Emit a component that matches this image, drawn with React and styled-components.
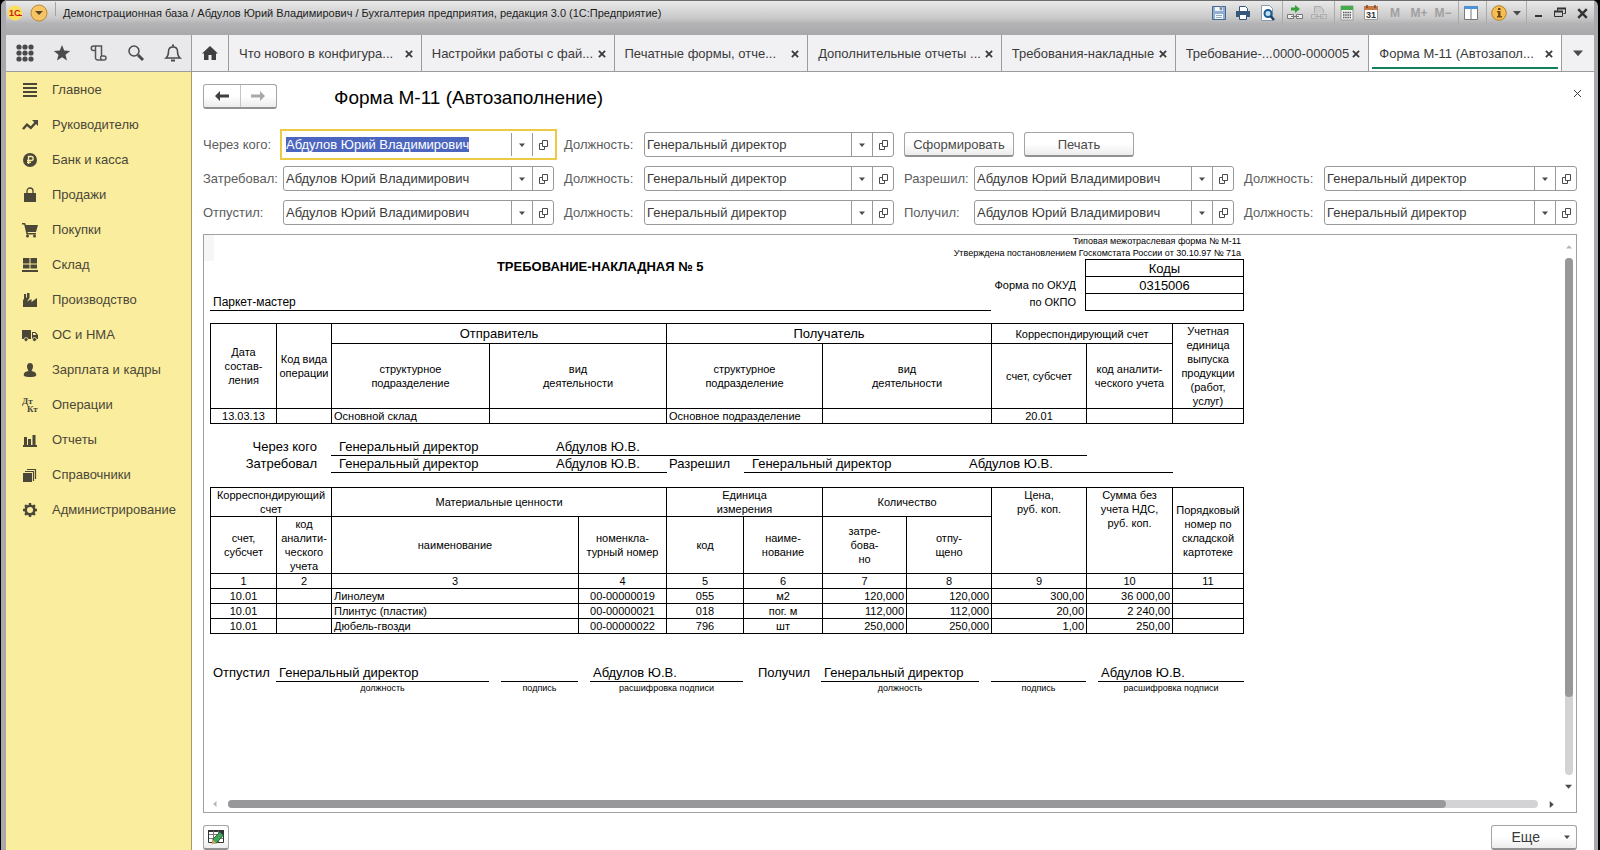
import React, { useEffect, useRef } from 'react';
import styled, { createGlobalStyle, css } from 'styled-components';

const GlobalStyle = createGlobalStyle`
  * {
    box-sizing: border-box;
  }
  body {
    margin: 0;
    background: #000;
    color: #3a3a3a;
    font-family: "Liberation Sans", Arial, sans-serif;
    font-size: 13px;
  }
  button,
  input {
    font: inherit;
    color: inherit;
  }
  button {
    padding: 0;
    border: none;
    background: none;
    cursor: pointer;
  }
`;

const sections = [
  ['Главное', 'main'],
  ['Руководителю', 'chart'],
  ['Банк и касса', 'bank'],
  ['Продажи', 'bag'],
  ['Покупки', 'cart'],
  ['Склад', 'stock'],
  ['Производство', 'factory'],
  ['ОС и НМА', 'truck'],
  ['Зарплата и кадры', 'person'],
  ['Операции', 'dtkt'],
  ['Отчеты', 'bars'],
  ['Справочники', 'books'],
  ['Администрирование', 'gear'],
];

const tabs = [
  { title: 'Что нового в конфигура...', grow: 193 },
  { title: 'Настройки работы с фай...', grow: 193 },
  { title: 'Печатные формы, отче...', grow: 194 },
  { title: 'Дополнительные отчеты ...', grow: 194 },
  { title: 'Требования-накладные', grow: 172 },
  { title: 'Требование-...0000-000005', grow: 194 },
  { title: 'Форма М-11 (Автозапол...', grow: 193, active: true },
];

const items = [
  ['10.01', '', 'Линолеум', '00-00000019', '055', 'м2', '120,000', '120,000', '300,00', '36 000,00', ''],
  ['10.01', '', 'Плинтус (пластик)', '00-00000021', '018', 'пог. м', '112,000', '112,000', '20,00', '2 240,00', ''],
  ['10.01', '', 'Дюбель-гвозди', '00-00000022', '796', 'шт', '250,000', '250,000', '1,00', '250,00', ''],
];

const aligns = ['center', 'center', 'left', 'center', 'center', 'center', 'right', 'right', 'right', 'right', 'center'];

const person = 'Абдулов Юрий Владимирович';
const post = 'Генеральный директор';
const shortName = 'Абдулов Ю.В.';

const sectionIcons = {
  main: <path d="M1 1h14v2H1zM1 5h14v2H1zM1 9h14v2H1zM1 13h14v2H1z" />,
  chart: <path d="M0 11.500 4.800 6l4 3.200 3.500-4L10 3h6v6l-2-2-5 5.400-4-3.200L2 12.800z" />,
  bank: (
    <>
      <circle cx="8" cy="8" r="7" />
      <path d="M6.500 12V4.500h2.700a2 2 0 0 1 0 4H5M5 10.400h4" fill="none" stroke="#fbed9e" strokeWidth="1.300" />
    </>
  ),
  bag: (
    <>
      <path d="M2 6h12v9H2z" />
      <path d="M5 8V4a3 3 0 0 1 6 0v4" fill="none" stroke="currentColor" strokeWidth="1.300" />
    </>
  ),
  cart: (
    <>
      <path d="M0 1h3l1 2h12l-2 7H5.500l.3 1H14v1.500H4.500L2.200 2.500H0z" />
      <circle cx="5.500" cy="14" r="1.500" />
      <circle cx="12.500" cy="14" r="1.500" />
    </>
  ),
  stock: <path d="M1 1h6.500v5.500H1zM8.500 1H15v5.500H8.500zM1 7.500h6.500v4H1zM8.500 7.500H15v4H8.500zM0 13h16v2H0z" />,
  factory: <path d="M1 15V8l1-1V2h2v4l1-1V1h2.500v5L5 9.500 9.500 7v3L15 6v9z" />,
  truck: (
    <>
      <path d="M0 3h9v9H0zM10 5h3.500L16 8v4h-6z" />
      <path d="M11 6h2l1.300 2H11z" fill="#fbed9e" />
      <circle cx="4" cy="12.500" r="2" stroke="#fbed9e" strokeWidth=".8" />
      <circle cx="12.500" cy="12.500" r="2" stroke="#fbed9e" strokeWidth=".8" />
    </>
  ),
  person: <path d="M8 1c2 0 3 1.500 3 3.500S9.700 8.500 9.500 9c3 .6 4.800 1.500 4.800 4.300C14 14.700 11 15 8 15s-6-.3-6.300-1.700c0-2.800 1.800-3.700 4.800-4.300C6.300 8.500 5 6.500 5 4.500S6 1 8 1z" />,
  dtkt: (
    <g fontFamily="Liberation Serif, serif" fontWeight="bold" fontSize="9">
      <text x="0" y="7">Дт</text>
      <text x="5" y="15">Кт</text>
    </g>
  ),
  bars: <path d="M1 13h14v2H1zM2 5h3v8H2zM6 7h3v6H6zM10.500 3h3v10h-3z" />,
  books: (
    <>
      <path d="M1 6h9v9H1z" />
      <path d="M3 4.500h8.500V14M5 2.500h8.500V12" fill="none" stroke="currentColor" strokeWidth="1.200" />
    </>
  ),
  gear: (
    <>
      <circle cx="8" cy="8" r="4.300" fill="none" stroke="currentColor" strokeWidth="2.600" />
      <path d="M6.800 1h2.400v3H6.800zM6.800 12h2.400v3H6.800zM1 6.800h3v2.400H1zM12 6.800h3v2.400h-3z" />
      <path d="M6.800 1h2.400v3H6.800zM6.800 12h2.400v3H6.800zM1 6.800h3v2.400H1zM12 6.800h3v2.400h-3z" transform="rotate(45 8 8)" />
    </>
  ),
};

const Caret = ({ size = 6, dir = 'down', color = '#4a4a4a' }) => {
  const turn = { down: 0, left: 90, up: 180, right: 270 }[dir];
  return (
    <svg width={size} height={size} viewBox="0 0 8 8" fill={color} aria-hidden="true">
      <path d="M0 2h8L4 6.500z" transform={`rotate(${turn} 4 4)`} />
    </svg>
  );
};

const Cross = ({ size = 9, width = 2 }) => (
  <svg width={size} height={size} viewBox="0 0 9 9" stroke="currentColor" strokeWidth={width} aria-hidden="true">
    <path d="M1 1l7 7M8 1L1 8" />
  </svg>
);

const OpenIcon = () => (
  <svg width="12" height="12" viewBox="0 0 12 12" fill="none" stroke="#4a4a4a" aria-hidden="true">
    <path d="M5.500 1.500h5v6h-5zM5.500 4.500h-3v6h5v-3" />
  </svg>
);

const TitleIcon = ({ children }) => (
  <svg width="16" height="16" viewBox="0 0 16 16" aria-hidden="true">{children}</svg>
);

const TitleBar = () => (
  <Title>
    <TitleLeft>
      <svg width="16" height="16" viewBox="0 0 16 16" aria-hidden="true">
        <circle cx="8" cy="8" r="7.500" fill="#fbdf5c" />
        <text x="2" y="11" fontSize="9" fontWeight="bold" fill="#c8201c">1C</text>
        <path d="M10 10.500h5" stroke="#c8201c" />
      </svg>
      <button type="button" aria-label="Меню">
        <svg width="18" height="18" viewBox="0 0 18 18">
          <circle cx="9" cy="9" r="8" fill="#f6c465" stroke="#bf8a32" />
          <path d="M5 7h8l-4 4z" fill="#5a4526" />
        </svg>
      </button>
      <Divider />
      <TitleText>
        Демонстрационная база / Абдулов Юрий Владимирович / Бухгалтерия предприятия, редакция 3.0 (1С:Предприятие)
      </TitleText>
    </TitleLeft>
    <TitleGroup>
      <TitleButton type="button" aria-label="Сохранить">
        <TitleIcon>
          <path d="M1.500 1.500h13v13h-13z" fill="#8fb0d2" stroke="#44688f" />
          <path d="M4 2h8v4H4zM4 9h8v5H4z" fill="#f3f7fb" />
          <path d="M9 2h2v3H9zM5 10.500h6M5 12.500h6" fill="#44688f" stroke="#9ab" />
        </TitleIcon>
      </TitleButton>
      <TitleButton type="button" aria-label="Печать">
        <TitleIcon>
          <path d="M4.500 1.500h6l2 2V7h-8z" fill="#fff" stroke="#35577c" />
          <path d="M1 6h14v6H1z" fill="#35577c" />
          <path d="M4.500 9.500h7v5h-7z" fill="#fff" stroke="#35577c" />
        </TitleIcon>
      </TitleButton>
      <TitleButton type="button" aria-label="Предварительный просмотр">
        <TitleIcon>
          <path d="M2.500.5h8l3 3v12h-11z" fill="#fff" stroke="#8a9bb0" />
          <circle cx="9" cy="8.500" r="3.500" fill="#c4dff2" stroke="#1d5e92" strokeWidth="2" />
          <path d="M11.500 11l3.500 4" stroke="#1d3f60" strokeWidth="2.500" />
        </TitleIcon>
      </TitleButton>
    </TitleGroup>
    <TitleGroup $line>
      <TitleButton type="button" aria-label="Получить ссылку">
        <TitleIcon>
          <path d="M4 2.500h4V0l5 4-5 4V5.500H4z" fill="#37a23c" />
          <path d="M.5 9.500h6v4h-6zM9.500 9.500h6v4h-6zM4 11.500h8" fill="#eee" stroke="#777" />
        </TitleIcon>
      </TitleButton>
      <TitleButton type="button" aria-label="Перейти по ссылке">
        <TitleIcon>
          <path d="M3.500 8V1.500h6l3 3V8M.5 9.500h6v4h-6zM9.500 9.500h6v4h-6zM4 11.500h8" fill="#ccc" stroke="#adadad" />
        </TitleIcon>
      </TitleButton>
    </TitleGroup>
    <TitleGroup $line>
      <TitleButton type="button" aria-label="Калькулятор">
        <TitleIcon>
          <path d="M2 1h12v14H2z" fill="#f3f3f3" stroke="#999" />
          <path d="M2 1h12v4H2z" fill="#45ab49" />
          <path d="M4 7.500h8M4 10h8M4 12.500h8" stroke="#555" strokeWidth="1.500" strokeDasharray="1.500 .7" />
        </TitleIcon>
      </TitleButton>
      <TitleButton type="button" aria-label="Календарь">
        <TitleIcon>
          <path d="M1.500 1.500h13v13h-13z" fill="#fff" stroke="#999" />
          <path d="M1 1h14v4H1z" fill="#c47a45" />
          <path d="M4 0v3M12 0v3" stroke="#7a4a28" strokeWidth="1.500" />
          <text x="3" y="13" fontSize="9" fill="#333">31</text>
        </TitleIcon>
      </TitleButton>
      <TitleButton type="button">M</TitleButton>
      <TitleButton type="button">M+</TitleButton>
      <TitleButton type="button">M−</TitleButton>
    </TitleGroup>
    <TitleGroup $line>
      <TitleButton type="button" aria-label="Панели">
        <TitleIcon>
          <path d="M1.500 1.500h13v13h-13z" fill="#fff" stroke="#777" />
          <path d="M1 1h14v3H1z" fill="#4d91d6" />
          <path d="M8 4v11" stroke="#777" />
        </TitleIcon>
      </TitleButton>
    </TitleGroup>
    <TitleGroup $line>
      <TitleButton type="button" aria-label="Справка">
        <TitleIcon>
          <circle cx="8" cy="8" r="7.300" fill="#f5bd52" stroke="#b98025" />
          <path d="M7 3h2.500v2H7zM6 6h3.500v5H11v1.500H6V11h1V7.500H6z" fill="#6b4c1c" />
        </TitleIcon>
      </TitleButton>
      <TitleButton type="button" $w={12} aria-label="Еще"><Caret size={8} /></TitleButton>
    </TitleGroup>
    <TitleGroup $line>
      <TitleButton type="button" $w={22} aria-label="Свернуть">
        <TitleIcon><path d="M5 10h7v2H5z" fill="#333" /></TitleIcon>
      </TitleButton>
      <TitleButton type="button" $w={22} aria-label="Развернуть">
        <TitleIcon>
          <path d="M5.500 6.500v-3h8v5h-2M2.500 6.500h8v5h-8z" fill="none" stroke="#333" />
          <path d="M5 3.500h9M2 6.500h9" stroke="#333" strokeWidth="2" />
        </TitleIcon>
      </TitleButton>
      <TitleButton type="button" $w={22} $dark aria-label="Закрыть"><Cross size={11} /></TitleButton>
    </TitleGroup>
  </Title>
);

const Tools = () => (
  <ToolStrip>
    <button type="button" aria-label="Меню функций">
      <svg width="18" height="18" viewBox="0 0 18 18" fill="#4a4a4a">
        {[3, 9, 15].map((y) => [3, 9, 15].map((x) => <circle key={`${x}${y}`} cx={x} cy={y} r="2.600" />))}
      </svg>
    </button>
    <button type="button" aria-label="Избранное">
      <svg width="18" height="18" viewBox="0 0 18 18" fill="#4a4a4a">
        <path d="M9 1l2.200 5.600 6 .3-4.700 3.800L14 16.500l-5-3.300-5 3.300 1.500-5.800L.8 6.900l6-.3z" />
      </svg>
    </button>
    <button type="button" aria-label="История">
      <svg width="18" height="18" viewBox="0 0 18 18" fill="none" stroke="#555" strokeWidth="1.500">
        <path d="M5 6.500H3.500a2 2 0 0 1 0-4.500H11.500v10.500M5.500 2.500v11A2.300 2.300 0 0 0 7.800 16H14a2 2 0 0 0 0-4h-2.500c-1.300.5-1.300 3.500.5 3.800" />
      </svg>
    </button>
    <button type="button" aria-label="Поиск">
      <svg width="18" height="18" viewBox="0 0 18 18" fill="none" stroke="#4a4a4a">
        <circle cx="7" cy="7" r="5" strokeWidth="1.500" />
        <path d="M11 11l5 5" strokeWidth="3" />
      </svg>
    </button>
    <button type="button" aria-label="Оповещения">
      <svg width="18" height="18" viewBox="0 0 18 18" fill="none" stroke="#4a4a4a" strokeWidth="1.500">
        <path d="M2 14h14c-2-1.500-2.500-2.500-2.500-6.500C13.500 4.500 11.500 3 9 3S4.500 4.500 4.500 7.500C4.500 11.500 4 12.500 2 14z" />
        <path d="M8 1.500h2M7 16.500h4" strokeWidth="2" />
      </svg>
    </button>
  </ToolStrip>
);

const Field = ({ id, label, value, focused }) => {
  const ref = useRef(null);
  useEffect(() => {
    if (focused) {
      ref.current.focus();
      ref.current.select();
    }
  }, [focused]);
  return (
    <>
      <Label htmlFor={id}>{label}</Label>
      <FieldBox $focused={focused}>
        <input id={id} ref={ref} defaultValue={value} spellCheck="false" />
        <FieldButton type="button" aria-label="Выбрать"><Caret /></FieldButton>
        <FieldButton type="button" aria-label="Открыть"><OpenIcon /></FieldButton>
      </FieldBox>
    </>
  );
};

const Filters = () => (
  <FilterGrid>
    <Field id="via" label="Через кого:" value={person} focused />
    <Field id="viaPost" label="Должность:" value={post} />
    <FilterActions>
      <PushButton type="button">Сформировать</PushButton>
      <PushButton type="button">Печать</PushButton>
    </FilterActions>
    <Field id="requested" label="Затребовал:" value={person} />
    <Field id="requestedPost" label="Должность:" value={post} />
    <Field id="allowed" label="Разрешил:" value={person} />
    <Field id="allowedPost" label="Должность:" value={post} />
    <Field id="released" label="Отпустил:" value={person} />
    <Field id="releasedPost" label="Должность:" value={post} />
    <Field id="received" label="Получил:" value={person} />
    <Field id="receivedPost" label="Должность:" value={post} />
  </FilterGrid>
);

const Cols = ({ widths }) => (
  <colgroup>
    {widths.map((w, i) => <col key={i} style={{ width: w }} />)}
  </colgroup>
);

const RouteTable = () => (
  <DataTable>
    <Cols widths={[66, 55, 158, 177, 156, 169, 95, 86, 71]} />
    <thead>
      <Row $h={20}>
        <th rowSpan={2}>Дата<br />состав-<br />ления</th>
        <th rowSpan={2}>Код вида<br />операции</th>
        <Big colSpan={2}>Отправитель</Big>
        <Big colSpan={2}>Получатель</Big>
        <th colSpan={2}>Корреспондирующий счет</th>
        <th rowSpan={2}>Учетная<br />единица<br />выпуска<br />продукции<br />(работ,<br />услуг)</th>
      </Row>
      <Row $h={65}>
        <th>структурное<br />подразделение</th>
        <th>вид<br />деятельности</th>
        <th>структурное<br />подразделение</th>
        <th>вид<br />деятельности</th>
        <th>счет, субсчет</th>
        <th>код аналити-<br />ческого учета</th>
      </Row>
    </thead>
    <tbody>
      <Row $h={15}>
        <td>13.03.13</td>
        <td />
        <Cell $align="left">Основной склад</Cell>
        <td />
        <Cell $align="left">Основное подразделение</Cell>
        <td />
        <td>20.01</td>
        <td />
        <td />
      </Row>
    </tbody>
  </DataTable>
);

const ItemsTable = () => (
  <DataTable>
    <Cols widths={[66, 55, 247, 88, 77, 79, 84, 85, 95, 86, 71]} />
    <thead>
      <Row $h={29}>
        <th colSpan={2}>Корреспондирующий<br />счет</th>
        <th colSpan={2}>Материальные ценности</th>
        <th colSpan={2}>Единица<br />измерения</th>
        <th colSpan={2}>Количество</th>
        <Top rowSpan={2}>Цена,<br />руб. коп.</Top>
        <Top rowSpan={2}>Сумма без<br />учета НДС,<br />руб. коп.</Top>
        <th rowSpan={2}>Порядковый<br />номер по<br />складской<br />картотеке</th>
      </Row>
      <Row $h={57}>
        <th>счет,<br />субсчет</th>
        <th>код<br />аналити-<br />ческого<br />учета</th>
        <th>наименование</th>
        <th>номенкла-<br />турный номер</th>
        <th>код</th>
        <th>наиме-<br />нование</th>
        <th>затре-<br />бова-<br />но</th>
        <th>отпу-<br />щено</th>
      </Row>
      <Row $h={15}>
        {aligns.map((_, i) => <th key={i}>{i + 1}</th>)}
      </Row>
    </thead>
    <tbody>
      {items.map((item) => (
        <Row key={item[3]} $h={15}>
          {item.map((value, i) => <Cell key={i} $align={aligns[i]}>{value}</Cell>)}
        </Row>
      ))}
    </tbody>
  </DataTable>
);

const Sheet = () => (
  <Paper>
    <Approval>
      Типовая межотраслевая форма № М-11<br />
      Утверждена постановлением Госкомстата России от 30.10.97 № 71а
    </Approval>
    <SheetHead>
      <Organization>
        <h2>ТРЕБОВАНИЕ-НАКЛАДНАЯ № 5</h2>
        <p>Паркет-мастер</p>
      </Organization>
      <CodesTable>
        <Cols widths={[95, 158]} />
        <tbody>
          <tr><th /><td>Коды</td></tr>
          <tr><th scope="row">Форма по ОКУД</th><td>0315006</td></tr>
          <tr><th scope="row">по ОКПО</th><td /></tr>
        </tbody>
      </CodesTable>
    </SheetHead>
    <RouteTable />
    <Approvers>
      <ApproverLine>
        <ApproverRole>Через кого</ApproverRole>
        <Underlined $w={756}><span>{post}</span><span>{shortName}</span></Underlined>
      </ApproverLine>
      <ApproverLine>
        <ApproverRole>Затребовал</ApproverRole>
        <Underlined $w={336}><span>{post}</span><span>{shortName}</span></Underlined>
        <ApproverRole $second>Разрешил</ApproverRole>
        <Underlined $w={429}><span>{post}</span><span>{shortName}</span></Underlined>
      </ApproverLine>
    </Approvers>
    <ItemsTable />
    <Signatures>
      <SignRole>Отпустил</SignRole>
      <Sign $w={213}><b>{post}</b><small>должность</small></Sign>
      <Sign $w={77}><b /><small>подпись</small></Sign>
      <Sign $w={153}><b>{shortName}</b><small>расшифровка подписи</small></Sign>
      <SignRole>Получил</SignRole>
      <Sign $w={158}><b>{post}</b><small>должность</small></Sign>
      <Sign $w={95}><b /><small>подпись</small></Sign>
      <Sign $w={146}><b>{shortName}</b><small>расшифровка подписи</small></Sign>
    </Signatures>
  </Paper>
);

const App = () => (
  <>
    <GlobalStyle />
    <Window>
      <TitleBar />
      <TopBar>
        <Tools />
        <HomeTab type="button" aria-label="Начальная страница">
          <svg width="16" height="14" viewBox="0 0 16 14" fill="#3f3f3f">
            <path d="M8 0l8 7.500h-2V14H9.500V9h-3v5H2V7.500H0z" />
          </svg>
        </HomeTab>
        {tabs.map((tab) => (
          <Tab key={tab.title} $grow={tab.grow} $active={tab.active}>
            <TabName type="button">{tab.title}</TabName>
            <button type="button" aria-label="Закрыть вкладку"><Cross size={8} /></button>
          </Tab>
        ))}
        <MoreTabs type="button" aria-label="Все вкладки"><Caret size={10} /></MoreTabs>
      </TopBar>
      <Body>
        <Sidebar>
          {sections.map(([name, icon]) => (
            <Section href="#" key={name}>
              <svg width="16" height="16" viewBox="0 0 16 16" fill="currentColor" aria-hidden="true">
                {sectionIcons[icon]}
              </svg>
              {name}
            </Section>
          ))}
        </Sidebar>
        <Main>
          <Heading>
            <History>
              <button type="button" aria-label="Назад">
                <svg width="14" height="10" viewBox="0 0 14 10" fill="#3f3f3f"><path d="M0 5l5-5v3.500h9v3H5V10z" /></svg>
              </button>
              <button type="button" aria-label="Вперед">
                <svg width="14" height="10" viewBox="0 0 14 10" fill="#a8a8a8"><path d="M14 5L9 0v3.500H0v3h9V10z" /></svg>
              </button>
            </History>
            <h1>Форма М-11 (Автозаполнение)</h1>
            <CloseForm type="button" aria-label="Закрыть"><Cross width={1} /></CloseForm>
          </Heading>
          <Filters />
          <Frame>
            <Sheet />
            <VScroll>
              <Caret size={6} dir="up" color="#b5b5b5" />
              <Track><Thumb style={{ height: '85%' }} /></Track>
              <Caret size={7} />
            </VScroll>
            <HScroll>
              <Caret size={6} dir="left" color="#b5b5b5" />
              <Track><Thumb style={{ width: '93%' }} /></Track>
              <Caret size={7} dir="right" />
            </HScroll>
          </Frame>
          <Footer>
            <EditButton type="button" aria-label="Редактирование">
              <svg width="16" height="16" viewBox="0 0 16 16">
                <path d="M.5 1.500h15v12H.5z" fill="#fff" stroke="#333" />
                <path d="M0 2h16" stroke="#333" strokeWidth="2" />
                <path d="M1 5.500h14M1 9.500h14M5.500 2v11M10.500 2v11" stroke="#777" />
                <path d="M5 13.500l0-3.500L12 3l3.500 3-7 8z" fill="#41a557" stroke="#24663a" />
                <path d="M12 3l1.500-1.500 2.500 2.500-1 2z" fill="#333" />
                <path d="M3.500 15.500l1.300-5 3.500 3.500z" fill="#c9a05c" />
              </svg>
            </EditButton>
            <MoreButton type="button">Еще<Caret /></MoreButton>
          </Footer>
        </Main>
      </Body>
    </Window>
  </>
);

export default App;

const center = css`
  display: flex;
  align-items: center;
  justify-content: center;
`;

const raised = css`
  border: 1px solid #a5a5a5;
  border-bottom: 2px solid #929292;
  border-radius: 3px;
  background: linear-gradient(#fff 50%, #ececec);
`;

const Window = styled.div`
  display: flex;
  flex-direction: column;
  min-height: 100vh;
  margin: 0 2px 0 1px;
  border: solid #a9a9ad;
  border-width: 0 4px 0 5px;
  border-radius: 6px 6px 0 0;
  background: #fff;
`;

const Title = styled.header`
  display: flex;
  align-items: flex-start;
  justify-content: space-between;
  height: 35px;
  border-top: 1px solid #6d6d6d;
  background: linear-gradient(#e9e9e9, #c9c9ca 50%, #b4b4b6 66%, #a8a8ab);
`;

const TitleLeft = styled.div`
  display: flex;
  flex: 1;
  gap: 7px;
  align-items: center;
  height: 24px;
  padding-left: 1px;
  button {
    display: flex;
  }
`;

const Divider = styled.span`
  width: 1px;
  height: 14px;
  margin-bottom: 8px;
  background: #a2a2a2;
`;

const TitleText = styled.span`
  color: #1c1c1c;
  font-size: 11px;
`;

const TitleGroup = styled.div`
  display: flex;
  height: 24px;
  padding-right: 3px;
  border-left: ${({ $line }) => ($line ? '1px solid #aaa' : 'none')};
  &:last-child {
    padding-right: 1px;
  }
`;

const TitleButton = styled.button`
  ${center}
  width: ${({ $w }) => $w || 24}px;
  color: ${({ $dark }) => ($dark ? '#333' : '#a0a0a0')};
  font-size: 12px;
  font-weight: bold;
`;

const TopBar = styled.div`
  display: flex;
  height: 37px;
  border-bottom: 1px solid #9c9c9c;
  background: #f1f1f3;
`;

const ToolStrip = styled.div`
  display: flex;
  flex: none;
  width: 186px;
  border-right: 1px solid #9c9c9c;
  background: #e9e9ec;
  button {
    ${center}
    flex: 1;
  }
`;

const HomeTab = styled.button`
  ${center}
  flex: none;
  width: 37px;
  border-right: 1px solid #9c9c9c;
`;

const Tab = styled.div`
  display: flex;
  flex: ${({ $grow }) => $grow} 1 0;
  align-items: center;
  min-width: 0;
  padding: 0 8px 0 10px;
  border-right: 1px solid #9c9c9c;
  ${({ $active }) => $active && css`
    background: linear-gradient(#12805c, #12805c) center bottom 2px / calc(100% - 6px) 2px no-repeat #fff;
  `}
`;

const TabName = styled.button`
  flex: 1;
  overflow: hidden;
  text-align: left;
  white-space: nowrap;
`;

const MoreTabs = styled.button`
  ${center}
  flex: none;
  width: 32px;
`;

const Body = styled.div`
  display: flex;
  flex: 1;
`;

const Sidebar = styled.nav`
  flex: none;
  width: 186px;
  border-right: 1px solid #a39b69;
  background: #fbed9e;
`;

const Section = styled.a`
  display: flex;
  gap: 14px;
  align-items: center;
  height: 35px;
  padding-left: 16px;
  color: #4a4738;
  text-decoration: none;
`;

const Main = styled.main`
  display: flex;
  flex: 1;
  flex-direction: column;
  min-width: 0;
  padding: 12px 17px 0 11px;
`;

const Heading = styled.div`
  display: flex;
  align-items: center;
  height: 25px;
  margin-right: -5px;
  h1 {
    flex: 1;
    margin: 0 0 0 57px;
    padding-top: 3px;
    color: #000;
    font-size: 19px;
    font-weight: normal;
  }
`;

const CloseForm = styled.button`
  display: flex;
  align-self: flex-start;
  padding-top: 5px;
`;

const History = styled.div`
  ${raised}
  display: flex;
  width: 74px;
  height: 25px;
  button {
    ${center}
    flex: 1;
  }
  button + button {
    border-left: 1px solid #c4c4c4;
  }
`;

const FilterGrid = styled.form`
  display: grid;
  grid-template-columns:
    80px minmax(0, 271fr) 90px minmax(0, 250fr)
    80px minmax(0, 260fr) 90px minmax(0, 253fr);
  row-gap: 9px;
  align-items: center;
  margin-top: 23px;
`;

const Label = styled.label`
  color: #5c5c5c;
  white-space: nowrap;
  div + & {
    padding-left: 10px;
  }
  &:nth-of-type(4n + 3) {
    padding-left: 0;
  }
`;

const FieldBox = styled.div`
  display: flex;
  height: 25px;
  border: 1px solid #999;
  border-radius: 3px;
  ${({ $focused }) => $focused && css`
    border-color: transparent;
    outline: 2px solid #ecca45;
    outline-offset: 1px;
    border-radius: 0;
  `}
  input {
    flex: 1;
    min-width: 0;
    padding: 0 2px;
    border: none;
    outline: none;
    background: none;
  }
  input::selection {
    background: #4c66c0;
    color: #fff;
  }
`;

const FieldButton = styled.button`
  ${center}
  width: 21px;
  border-left: 1px solid #999;
`;

const FilterActions = styled.div`
  display: flex;
  grid-column: span 4;
  gap: 10px;
  padding-left: 10px;
`;

const PushButton = styled.button`
  ${raised}
  width: 110px;
  height: 25px;
  color: #4a4a4a;
`;

const Frame = styled.section`
  display: grid;
  flex: 1;
  grid-template-columns: minmax(0, 1fr) 15px;
  grid-template-rows: minmax(0, 1fr) 16px;
  margin-top: 9px;
  border: 1px solid #a0a0a0;
`;

const Paper = styled.article`
  overflow: hidden;
  padding-left: 6px;
  color: #000;
  background: linear-gradient(#f6f6f4, #f6f6f4) 0 0 / 10px 26px no-repeat;
`;

const Approval = styled.p`
  width: 1034px;
  margin: 0;
  padding-right: 3px;
  font-size: 9px;
  line-height: 12px;
  text-align: right;
`;

const SheetHead = styled.div`
  display: flex;
  width: 1034px;
  margin-bottom: 12px;
`;

const Organization = styled.div`
  display: flex;
  flex: 1;
  flex-direction: column;
  justify-content: space-between;
  border-bottom: 1px solid #000;
  h2 {
    margin: 0;
    font-size: 13px;
    line-height: 16px;
    text-align: center;
  }
  p {
    margin: 0;
    padding-left: 3px;
    font-size: 12px;
    line-height: 16px;
  }
`;

const CodesTable = styled.table`
  width: 253px;
  table-layout: fixed;
  border-collapse: collapse;
  tr {
    height: 17px;
  }
  th,
  td {
    padding: 0;
    font-size: 13px;
    line-height: 15px;
    text-align: center;
  }
  th {
    padding-right: 9px;
    font-size: 11px;
    font-weight: normal;
    text-align: right;
    white-space: nowrap;
  }
  td {
    border: 1px solid #000;
  }
`;

const DataTable = styled.table`
  width: 1034px;
  table-layout: fixed;
  border-collapse: collapse;
  font-size: 11px;
  line-height: 14px;
  th,
  td {
    padding: 0;
    border: 1px solid #000;
    font-weight: normal;
    text-align: center;
  }
`;

const Row = styled.tr`
  height: ${({ $h }) => $h}px;
`;

const Big = styled.th`
  font-size: 13px;
`;

const Top = styled.th`
  vertical-align: top;
`;

const Cell = styled.td`
  && {
    padding: 0 2px;
    text-align: ${({ $align }) => $align};
  }
`;

const Approvers = styled.div`
  padding: 15px 0 14px;
`;

const ApproverLine = styled.div`
  display: flex;
  height: 17px;
  line-height: 16px;
`;

const ApproverRole = styled.span`
  width: ${({ $second }) => ($second ? 77 : 121)}px;
  padding-right: 14px;
  text-align: right;
`;

const Underlined = styled.span`
  display: flex;
  width: ${({ $w }) => $w}px;
  padding-left: 8px;
  border-bottom: 1px solid #000;
  span {
    flex: none;
    width: 217px;
  }
  span:last-child {
    width: auto;
  }
`;

const Signatures = styled.div`
  display: flex;
  gap: 12px;
  width: 1034px;
  margin-top: 31px;
`;

const SignRole = styled.span`
  width: 54px;
  padding-left: 3px;
  line-height: 16px;
`;

const Sign = styled.span`
  width: ${({ $w }) => $w}px;
  text-align: center;
  b {
    display: block;
    height: 17px;
    padding-left: 3px;
    border-bottom: 1px solid #000;
    font-weight: normal;
    line-height: 16px;
    text-align: left;
  }
  small {
    display: block;
    font-size: 9px;
    line-height: 12px;
  }
`;

const VScroll = styled.div`
  display: flex;
  flex-direction: column;
  gap: 8px;
  align-items: center;
  padding: 9px 0 6px;
`;

const HScroll = styled.div`
  display: flex;
  gap: 10px;
  align-items: center;
  padding: 0 6px 0 8px;
`;

const Track = styled.div`
  flex: 1;
  min-width: 8px;
  min-height: 8px;
  border-radius: 4px;
  background: #d3d3d5;
`;

const Thumb = styled.div`
  width: 8px;
  height: 8px;
  border-radius: 4px;
  background: #98989a;
`;

const Footer = styled.footer`
  display: flex;
  justify-content: space-between;
  padding-top: 12px;
`;

const EditButton = styled.button`
  ${raised}
  ${center}
  width: 26px;
  height: 25px;
`;

const MoreButton = styled.button`
  ${raised}
  display: flex;
  gap: 24px;
  align-items: center;
  justify-content: flex-end;
  width: 86px;
  height: 25px;
  padding-right: 6px;
  font-size: 14px;
`;
